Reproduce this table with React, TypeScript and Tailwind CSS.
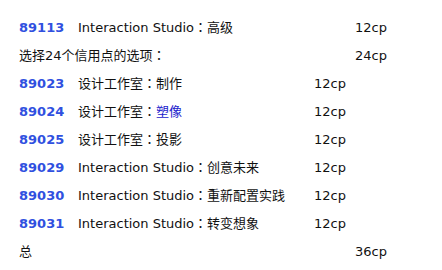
import React from "react";

type Row =
  | { kind: "course"; code: string; title: React.ReactNode; credit: string; wide?: boolean }
  | { kind: "label"; label: React.ReactNode; credit: string };

const C = () => (
  <span style={{ fontFamily: '"Noto Sans CJK TC", sans-serif' }}>：</span>
);

const rows: Row[] = [
  { kind: "course", code: "89113", title: <>Interaction Studio<C />高级</>, credit: "12cp", wide: true },
  { kind: "label", label: <>选择24个信用点的选项<C /></>, credit: "24cp" },
  { kind: "course", code: "89023", title: <>设计工作室<C />制作</>, credit: "12cp" },
  {
    kind: "course",
    code: "89024",
    title: (
      <>
        设计工作室<C /><span className="text-[#2222cc]">塑像</span>
      </>
    ),
    credit: "12cp",
  },
  { kind: "course", code: "89025", title: <>设计工作室<C />投影</>, credit: "12cp" },
  { kind: "course", code: "89029", title: <>Interaction Studio<C />创意未来</>, credit: "12cp" },
  { kind: "course", code: "89030", title: <>Interaction Studio<C />重新配置实践</>, credit: "12cp" },
  { kind: "course", code: "89031", title: <>Interaction Studio<C />转变想象</>, credit: "12cp" },
  { kind: "label", label: "总", credit: "36cp" },
];

export default function App() {
  return (
    <div
      className="w-[442px] h-[270px] bg-white text-[13px] text-[#111] pt-[13px] pl-[19px]"
      style={{ fontFamily: '"DejaVu Sans", "Noto Sans CJK SC", sans-serif' }}
    >
      <div className="grid grid-cols-[59px_236px_41px_1fr] auto-rows-[28px] items-center leading-none">
        {rows.map((r, i) =>
          r.kind === "course" ? (
            <React.Fragment key={i}>
              <div className="font-bold text-[#3050e0]">{r.code}</div>
              <div className="whitespace-nowrap">{r.title}</div>
              {r.wide ? (
                <>
                  <div />
                  <div>{r.credit}</div>
                </>
              ) : (
                <>
                  <div>{r.credit}</div>
                  <div />
                </>
              )}
            </React.Fragment>
          ) : (
            <React.Fragment key={i}>
              <div className="col-span-3 whitespace-nowrap">{r.label}</div>
              <div>{r.credit}</div>
            </React.Fragment>
          )
        )}
      </div>
    </div>
  );
}
